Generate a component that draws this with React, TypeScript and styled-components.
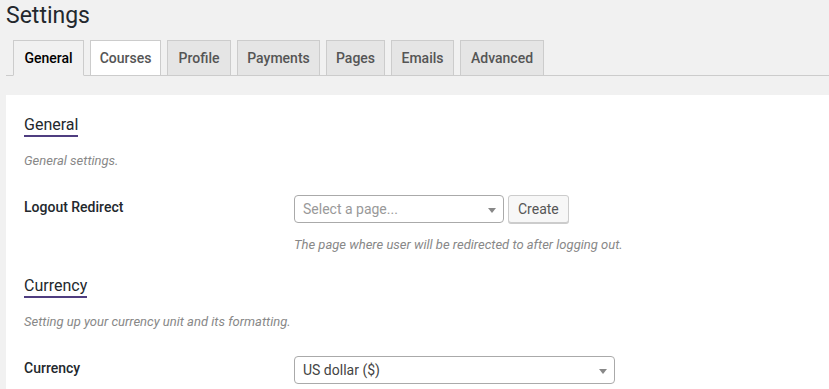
import React from 'react';
import styled, {createGlobalStyle} from 'styled-components';

const GlobalStyle = createGlobalStyle`
  html, body {
    margin: 0;
    padding: 0;
    background: #f1f1f1;
    font-family: Roboto, "Open Sans", sans-serif;
    color: #23282d;
    overflow: hidden;
  }
`;

type Tab = {label: string; width: number; state: 'active' | 'hover' | 'idle'};

const tabs: Tab[] = [
    {label: 'General', width: 71, state: 'active'},
    {label: 'Courses', width: 71, state: 'hover'},
    {label: 'Profile', width: 64, state: 'idle'},
    {label: 'Payments', width: 83, state: 'idle'},
    {label: 'Pages', width: 59, state: 'idle'},
    {label: 'Emails', width: 63, state: 'idle'},
    {label: 'Advanced', width: 84, state: 'idle'},
];

const App = () => {
    return (
        <Page>
            <GlobalStyle/>
            <Title>Settings</Title>
            <TabBar>
                {tabs.map(tab => (
                    <TabItem key={tab.label} $width={tab.width} $state={tab.state}>
                        {tab.label}
                    </TabItem>
                ))}
            </TabBar>
            <Panel>
                <Section>
                    <SectionTitle>General</SectionTitle>
                    <SectionDesc>General settings.</SectionDesc>
                    <FieldRow>
                        <FieldLabel>Logout Redirect</FieldLabel>
                        <FieldBody>
                            <Controls>
                                <SelectBox $width={210}>
                                    <Placeholder>Select a page...</Placeholder>
                                    <Arrow/>
                                </SelectBox>
                                <Button>Create</Button>
                            </Controls>
                            <Hint>The page where user will be redirected to after logging out.</Hint>
                        </FieldBody>
                    </FieldRow>
                </Section>
                <Section>
                    <SectionTitle>Currency</SectionTitle>
                    <SectionDesc>Setting up your currency unit and its formatting.</SectionDesc>
                    <FieldRow>
                        <FieldLabel>Currency</FieldLabel>
                        <FieldBody>
                            <SelectBox $width={321}>
                                <Value>US dollar ($)</Value>
                                <Arrow/>
                            </SelectBox>
                        </FieldBody>
                    </FieldRow>
                </Section>
            </Panel>
        </Page>
    );
};

export default App;


const Page = styled.div`
  padding-left: 6px;
  height: 389px;
  overflow: hidden;
`
const Title = styled.h1`
  margin: 0;
  padding-top: 1px;
  font-size: 23px;
  font-weight: 400;
  line-height: 29px;
  color: #23282d;
`
const TabBar = styled.div`
  display: flex;
  gap: 6px;
  margin-top: 10px;
  padding-left: 7px;
  border-bottom: 1px solid #ccc;
  height: 35px;
`
const TabItem = styled.div<{ $width: number; $state: Tab['state'] }>`
  box-sizing: border-box;
  width: ${p => p.$width}px;
  height: 36px;
  border: 1px solid #ccc;
  border-bottom-color: ${p => p.$state === 'active' ? '#f1f1f1' : '#ccc'};
  background: ${p => p.$state === 'active' ? '#f1f1f1' : p.$state === 'hover' ? '#fff' : '#e5e5e5'};
  color: ${p => p.$state === 'active' ? '#000' : '#555'};
  font-size: 14px;
  font-weight: 500;
  line-height: 35px;
  text-align: center;
  white-space: nowrap;
`
const Panel = styled.div`
  margin-top: 19px;
  background: #fff;
  padding: 20px 18px 40px;
  min-height: 300px;
`
const Section = styled.div`
  & + & {
    margin-top: 21px;
  }
`
const SectionTitle = styled.h2`
  display: inline-block;
  margin: 0;
  font-size: 16px;
  font-weight: 400;
  line-height: 20px;
  color: #23282d;
  border-bottom: 2px solid #4f3d80;
`
const SectionDesc = styled.p`
  margin: 14px 0 0;
  font-size: 13px;
  font-style: italic;
  line-height: 20px;
  color: #888;
`
const FieldRow = styled.div`
  display: flex;
  margin-top: 24px;
`
const FieldLabel = styled.div`
  width: 270px;
  flex-shrink: 0;
  padding-top: 2px;
  font-size: 14px;
  font-weight: 500;
  line-height: 20px;
  color: #23282d;
`
const FieldBody = styled.div`
  display: flex;
  flex-direction: column;
`
const Controls = styled.div`
  display: flex;
  gap: 4px;
`
const SelectBox = styled.div<{ $width: number }>`
  box-sizing: border-box;
  position: relative;
  width: ${p => p.$width}px;
  height: 28px;
  border: 1px solid #aaa;
  border-radius: 4px;
  background: #fff;
  padding: 0 20px 0 8px;
  display: flex;
  align-items: center;
  font-size: 14px;
`
const Placeholder = styled.span`
  color: #999;
`
const Value = styled.span`
  color: #444;
`
const Arrow = styled.span`
  position: absolute;
  right: 7px;
  top: 12px;
  width: 0;
  height: 0;
  border-style: solid;
  border-width: 5px 4px 0 4px;
  border-color: #888 transparent transparent transparent;
`
const Button = styled.button`
  box-sizing: border-box;
  height: 28px;
  padding: 0 9px;
  border: 1px solid #ccc;
  border-radius: 3px;
  background: #f7f7f7;
  box-shadow: 0 1px 0 #ccc;
  color: #555;
  font-family: inherit;
  font-size: 14px;
  cursor: pointer;
`
const Hint = styled.p`
  margin: 12px 0 0;
  font-size: 13px;
  font-style: italic;
  line-height: 20px;
  color: #888;
`
